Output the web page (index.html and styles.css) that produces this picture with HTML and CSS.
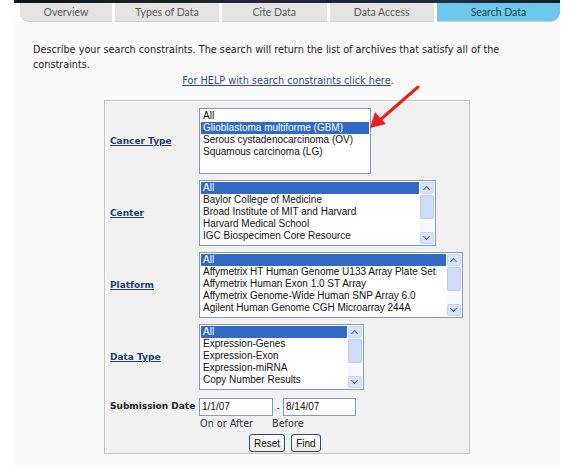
FILE: index.html
```html
<!DOCTYPE html>
<html>
<head>
<meta charset="utf-8">
<link rel="stylesheet" href="styles.css">
</head>
<body>
<div class="page">
  <div class="banner"></div>
  <nav class="tabs">
    <div class="tab first">Overview</div>
    <div class="tab">Types of Data</div>
    <div class="tab">Cite Data</div>
    <div class="tab">Data Access</div>
    <div class="tab active">Search Data</div>
  </nav>
  <main class="content">
    <p class="intro">Describe your search constraints. The search will return the list of archives that satisfy all of the constraints.</p>
    <p class="help"><a href="#">For HELP with search constraints click here</a>.</p>
    <div class="box">
      <div class="label"><a href="#">Cancer Type</a></div>
      <div class="list w-cancer">
        <div class="opts">
          <div class="opt">All</div>
          <div class="opt sel">Glioblastoma multiforme (GBM)</div>
          <div class="opt">Serous cystadenocarcinoma (OV)</div>
          <div class="opt">Squamous carcinoma (LG)</div>
        </div>
      </div>

      <div class="label"><a href="#">Center</a></div>
      <div class="list w-center">
        <div class="opts">
          <div class="opt sel">All</div>
          <div class="opt">Baylor College of Medicine</div>
          <div class="opt">Broad Institute of MIT and Harvard</div>
          <div class="opt">Harvard Medical School</div>
          <div class="opt">IGC Biospecimen Core Resource</div>
        </div>
        <div class="sb"><div class="btn up"></div><div class="track"><div class="thumb"></div></div><div class="btn down"></div></div>
      </div>

      <div class="label"><a href="#">Platform</a></div>
      <div class="list w-platform">
        <div class="opts">
          <div class="opt sel">All</div>
          <div class="opt">Affymetrix HT Human Genome U133 Array Plate Set</div>
          <div class="opt">Affymetrix Human Exon 1.0 ST Array</div>
          <div class="opt">Affymetrix Genome-Wide Human SNP Array 6.0</div>
          <div class="opt">Agilent Human Genome CGH Microarray 244A</div>
        </div>
        <div class="sb"><div class="btn up"></div><div class="track"><div class="thumb"></div></div><div class="btn down"></div></div>
      </div>

      <div class="label"><a href="#">Data Type</a></div>
      <div class="list w-dtype">
        <div class="opts">
          <div class="opt sel">All</div>
          <div class="opt">Expression-Genes</div>
          <div class="opt">Expression-Exon</div>
          <div class="opt">Expression-miRNA</div>
          <div class="opt">Copy Number Results</div>
        </div>
        <div class="sb"><div class="btn up"></div><div class="track"><div class="thumb"></div></div><div class="btn down"></div></div>
      </div>

      <div class="label date-label">Submission Date</div>
      <div class="dates">
        <div class="date-row">
          <div class="field f1">1/1/07</div>
          <span class="dash">-</span>
          <div class="field f2">8/14/07</div>
        </div>
        <div class="hints"><span class="h1">On or After</span><span>Before</span></div>
        <div class="buttons">
          <button class="xp">Reset</button>
          <button class="xp">Find</button>
        </div>
      </div>
    </div>
  </main>
  <svg class="arrow" width="60" height="50" viewBox="0 0 60 50">
    <line x1="54" y1="3" x2="16" y2="36" stroke="#e8201c" stroke-width="3" stroke-linecap="round"/>
    <polygon points="6,44 11,28 22,40" fill="#e8201c"/>
  </svg>
</div>
</body>
</html>
```
FILE: styles.css
```css
html, body { margin: 0; padding: 0; background: #ffffff; }
body { width: 576px; height: 467px; overflow: hidden; }
.page { position: relative; width: 576px; height: 467px; }

.banner {
  height: 3px;
  margin: 0 16px 0 14px;
  background: linear-gradient(90deg, #10161e 0%, #1c2330 35%, #2a2240 45%, #1a2434 60%, #223044 80%, #141a22 100%);
}
.tabs {
  display: flex;
  margin: 0 16px 0 20px;
  height: 18px;
  gap: 3px;
}
.tab {
  flex: 1 1 0;
  background: #e4e4e4;
  color: #5a5a5a;
  font-family: Lato, "Open Sans", sans-serif;
  font-size: 10.5px;
  display: flex;
  align-items: center;
  justify-content: center;
  box-shadow: 0 1px 0 #d0d0d0;
}
.tab.first { border-bottom-left-radius: 9px; flex-grow: 0.88; }
.tab.active { background: #6cc8ec; color: #1e3a55; border-bottom-right-radius: 9px; flex-grow: 1.18; }

.content {
  margin: 0 16px 0 14px;
  background: #fafafa;
  height: 446px;
  padding: 21px 0 0 19px;
  box-sizing: border-box;
  font-family: "DejaVu Sans", Verdana, sans-serif;
  font-size: 9.7px;
  color: #222;
}
.intro { margin: 0; width: 500px; line-height: 15px; }
.help { margin: 0; text-align: center; width: 510px; line-height: 15px; padding-top: 1px; }
.help a { color: #2c4a8c; }

.box {
  width: 366px;
  box-sizing: border-box;
  margin: 12px 0 0 71px;
  background: #f1f1f1;
  border: 1px solid #c4c4c4;
  box-shadow: inset 1px 1px 0 #ffffff;
  display: grid;
  grid-template-columns: 89px auto;
  row-gap: 6px;
  padding: 7px 0 6px 5px;
  align-items: center;
  align-content: start;
  height: 354px;
}
.label { font-weight: bold; font-size: 9px; }
.label a { color: #1d3c72; }
.date-label { align-self: start; padding-top: 5px; color: #222; }

.list {
  height: 66px;
  box-sizing: border-box;
  border: 1px solid #7f9db9;
  background: #ffffff;
  display: flex;
  padding: 1px;
  font-family: "Liberation Sans", Arial, sans-serif;
  font-size: 10px;
}
.w-cancer { width: 172px; }
.w-center { width: 237px; }
.w-platform { width: 264px; }
.w-dtype { width: 165px; }
.opts { flex: 1; }
.opt { height: 12px; line-height: 12px; padding-left: 2px; color: #111; white-space: nowrap; }
.opt.sel { background: #316ac5; color: #ffffff; }

.sb { width: 14px; display: flex; flex-direction: column; margin-left: 1px; }
.btn { height: 12px; background: #d8e4fa; border: 1px solid #c4d3f0; box-sizing: border-box; border-radius: 2px; position: relative; }
.btn::after { content: ""; position: absolute; left: 3px; width: 4px; height: 4px; border-left: 1.5px solid #4d6185; border-top: 1.5px solid #4d6185; }
.btn.up::after { top: 4px; transform: rotate(45deg); }
.btn.down::after { top: 1px; transform: rotate(225deg); }
.track { flex: 1; background: #f6f8fc; padding: 1px 0; }
.thumb { height: 24px; background: #cfdcfa; border: 1px solid #bccdf2; border-radius: 2px; box-sizing: border-box; }

.dates { font-size: 9.7px; padding-top: 2px; }
.date-row { display: flex; align-items: center; height: 18px; }
.field {
  height: 18px;
  box-sizing: border-box;
  border: 1px solid #7f9db9;
  background: #fff;
  font-family: "Liberation Sans", Arial, sans-serif;
  font-size: 10px;
  line-height: 16px;
  padding-left: 2px;
  color: #111;
}
.f1 { width: 74px; }
.f2 { width: 73px; }
.dash { width: 10px; text-align: center; font-family: "Liberation Sans", Arial, sans-serif; }
.hints { padding: 2px 0 0 1px; height: 12px; line-height: 12px; color: #333; }
.hints .h1 { display: inline-block; width: 72px; }
.buttons { display: flex; gap: 6px; padding: 4px 0 0 50px; }
.xp {
  height: 18px;
  box-sizing: border-box;
  border: 1px solid #2b4b74;
  border-radius: 3px;
  background: linear-gradient(#fdfdfc, #ecebe6);
  font-family: "Liberation Sans", Arial, sans-serif;
  font-size: 10px;
  padding: 0 4px;
  color: #111;
}

.arrow { position: absolute; left: 364px; top: 84px; }
```
